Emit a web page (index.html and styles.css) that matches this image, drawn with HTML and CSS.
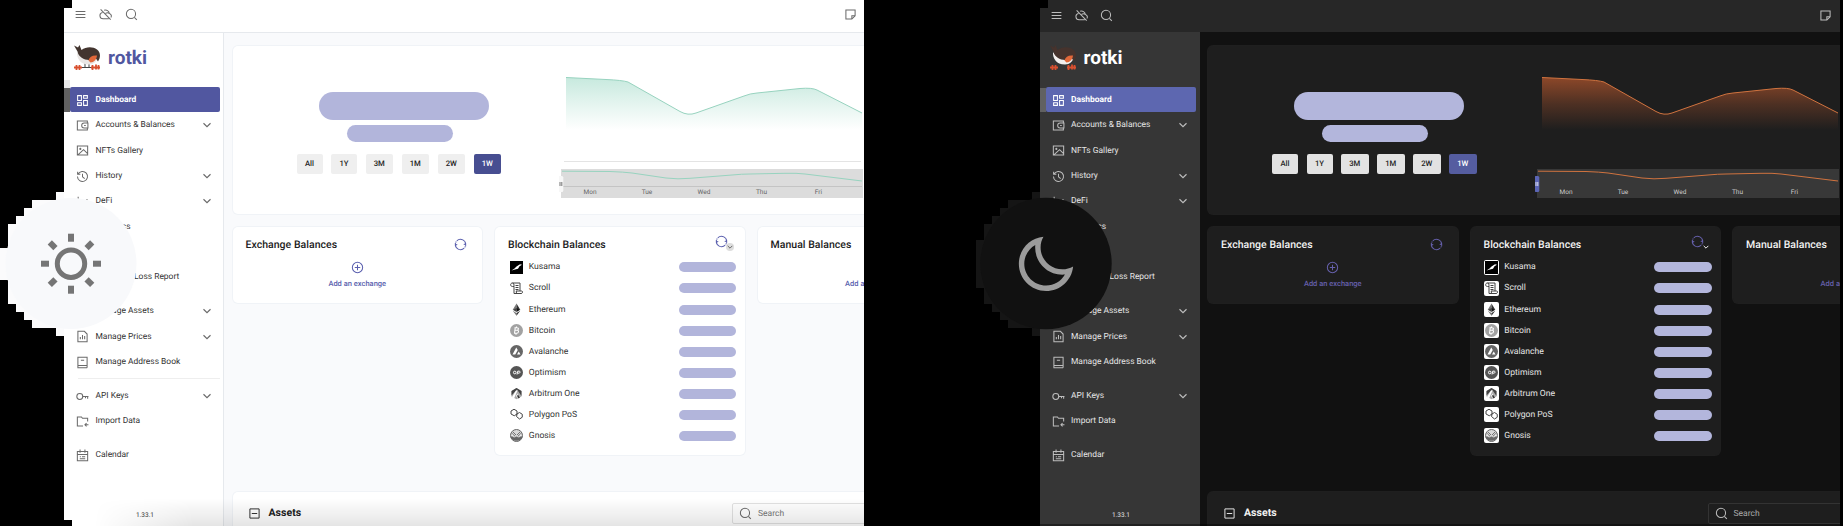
FILE: index.html
```html
<!DOCTYPE html>
<html lang="en">
<head>
<meta charset="utf-8">
<title>rotki</title>
<link rel="stylesheet" href="styles.css">
</head>
<body>
<svg class="sprite" aria-hidden="true">
  <defs>
    <linearGradient id="fade-light" x1="0" y1="0" x2="0" y2="1"><stop offset="0" stop-color="#8fd3bd" stop-opacity=".5"/><stop offset=".5" stop-color="#8fd3bd" stop-opacity=".24"/><stop offset="1" stop-color="#8fd3bd" stop-opacity="0"/></linearGradient>
    <linearGradient id="fade-dark" x1="0" y1="0" x2="0" y2="1"><stop offset="0" stop-color="#a8522c" stop-opacity=".8"/><stop offset=".5" stop-color="#a8522c" stop-opacity=".35"/><stop offset="1" stop-color="#a8522c" stop-opacity="0"/></linearGradient>
  </defs>
  <symbol id="i-menu" viewBox="0 0 24 24"><path d="M3 6.500h18M3 12h18M3 17.500h18"/></symbol>
  <symbol id="i-cloud" viewBox="0 0 24 24"><path d="M3 2.500l18.500 19M6.500 8.500A5.800 5.800 0 0 0 7.500 20h10.500M9.500 4.200A7 7 0 0 1 19 10a5 5 0 0 1 3 7.500M12 10a6 6 0 0 1 7 0"/></symbol>
  <symbol id="i-search" viewBox="0 0 24 24"><circle cx="11" cy="11" r="8.500"/><path d="M17.300 17.300l4.500 4.500"/></symbol>
  <symbol id="i-note" viewBox="0 0 24 24"><path d="M3.500 3.500h17v11l-6 6h-11zM20.500 14.500h-6v6"/></symbol>
  <symbol id="i-dashboard" viewBox="0 0 24 24"><path d="M3 3h7v9H3zM3 16h7v5H3zM14 12h7v9h-7zM14 3h7v5h-7z"/></symbol>
  <symbol id="i-wallet" viewBox="0 0 24 24"><path d="M21 7V3.500H2.500v17H21V17M22 7.500h-7a4.500 4.500 0 0 0 0 9h7zM15 12h3"/></symbol>
  <symbol id="i-image" viewBox="0 0 24 24"><path d="M2.500 3.500h19v17h-19zM3.500 20l10.500-9.500 7 7"/><circle cx="8" cy="9" r="1"/></symbol>
  <symbol id="i-history" viewBox="0 0 24 24"><path d="M3 3v5h5M3.800 7.500A9.300 9.300 0 1 1 2.700 12M12 7v5.500l4 3.500"/></symbol>
  <symbol id="i-line" viewBox="0 0 24 24"><path d="M4 3v17h17M7 14l4-4 4 4 6-6"/></symbol>
  <symbol id="i-file" viewBox="0 0 24 24"><path d="M3.500 2.500h12l5 5v14h-17zM8 17v-4M12 17V9M16 17v-6"/></symbol>
  <symbol id="i-book" viewBox="0 0 24 24"><path d="M20.500 17V2.500h-17v19h17M4 17.500h16.500v4M9 8h6"/></symbol>
  <symbol id="i-key" viewBox="0 0 24 24"><circle cx="7" cy="12" r="5.500"/><path d="M12 12h11M21.500 12v4M17.500 12v3"/></symbol>
  <symbol id="i-folder" viewBox="0 0 24 24"><path d="M21.500 12V6H12l-2-2.500H2.500v17H13M23 18h-6M19.500 15l-3 3 3 3"/></symbol>
  <symbol id="i-calendar" viewBox="0 0 24 24"><path d="M2.500 4.500h19v17h-19zM3 10h18M7.500 1v6M16.500 1v6M7 14.500h2M11 14.500h6M7 18h10"/></symbol>
  <symbol id="i-down" viewBox="0 0 24 24"><path d="M5 8.500l7 7 7-7"/></symbol>
  <symbol id="i-refresh" viewBox="0 0 24 24"><path d="M5.200 5.200A9.500 9.500 0 0 1 21.300 13.500M18.800 18.800A9.500 9.500 0 0 1 2.700 10.500M21.500 15v-4l-3.500.8M2.500 9v4l3.500-.8M3.200 8.500A9.500 9.500 0 0 1 4.200 6.500M20.800 15.500a9.500 9.500 0 0 1-1 2"/></symbol>
  <symbol id="i-plus" viewBox="0 0 24 24"><circle cx="12" cy="12" r="9.500"/><path d="M12 7v10M7 12h10"/></symbol>
  <symbol id="i-minus" viewBox="0 0 24 24"><path d="M3.500 3.500h17v17h-17zM7 12h10"/></symbol>

  <symbol id="c-kusama" viewBox="0 0 26 26"><rect width="26" height="26" fill="#000"/><path d="M3 19l6-4 4-4 7-4.500 4 1-5 3-3 5-6 1.500z" fill="#fff"/></symbol>
  <symbol id="c-scroll" viewBox="0 0 26 26"><path d="M5 9C0 9 0 2 5 2h15v16M5 2c3 0 3 3 3 7v14h14c4 0 4-5 1-5H12c3 3 0 5-2 5M11 7h6M11 11h6M11 15h6M5 9h3" fill="none" stroke="#444" stroke-width="2"/></symbol>
  <symbol id="c-ethereum" viewBox="0 0 26 26"><path d="M13 1v12L5.500 13.500z" fill="#777"/><path d="M13 1v12l7.500.5z" fill="#333"/><path d="M5.500 13.500L13 10.500v7.500z" fill="#444"/><path d="M20.500 13.500L13 10.500v7.500z" fill="#111"/><path d="M5.500 15.500L13 20v5.500z" fill="#777"/><path d="M20.500 15.500L13 20v5.500z" fill="#333"/></symbol>
  <symbol id="c-bitcoin" viewBox="0 0 26 26"><circle cx="13" cy="13" r="13" fill="#a2a2a2"/><path d="M10.500 7l-1.500 12M9 7.500h5c4 0 3.500 5 0 5h-4M10 12.500h4.500c4 0 3 6-1 6H8M13 5v2M12 19v2.500" fill="none" stroke="#fff" stroke-width="2.200"/></symbol>
  <symbol id="c-avalanche" viewBox="0 0 26 26"><circle cx="13" cy="13" r="13" fill="#666"/><path d="M12.500 5l3 5-5 9H5zM17.500 13l3.500 6h-7z" fill="#fff"/></symbol>
  <symbol id="c-optimism" viewBox="0 0 26 26"><circle cx="13" cy="13" r="13" fill="#555"/><ellipse cx="9.500" cy="13" rx="2.600" ry="2.700" fill="none" stroke="#fff" stroke-width="2"/><path d="M14 17l1.500-6.700h3c2.500 0 2 4-.5 4h-2.500" fill="none" stroke="#fff" stroke-width="2"/></symbol>
  <symbol id="c-arbitrum" viewBox="0 0 26 26"><path d="M3 19V8l10-6 10 6v11l-10 5.500z" fill="#aaa"/><path d="M3 17V8l10-6 10 6v10l-9-13z" fill="#444"/><path d="M4 20l8-13h3L8 23zM12 18l3-5 5 8-3 2z" fill="#fff"/><path d="M14 18l2-3 4 6-3 2z" fill="#333"/></symbol>
  <symbol id="c-polygon" viewBox="0 0 26 26"><path d="M14 12l-5.500 3.500-6.500-3.500V6l6-3.500L14 6v7l-1 4 6 5 5.500-3.500v-6L19 9l-6 3.500" fill="none" stroke="#444" stroke-width="2"/></symbol>
  <symbol id="c-gnosis" viewBox="0 0 26 26"><circle cx="13" cy="13" r="12" fill="#d8d8d8" stroke="#666" stroke-width="2"/><path d="M1 15h24a12.500 12 0 0 1-24 0z" fill="#666"/><path d="M3 8l10 9L23 8M6 6l7 7 7-7" fill="none" stroke="#666" stroke-width="1.800"/><path d="M5 11c0 6 6 6 8 2 2 4 8 4 8-2" fill="none" stroke="#fff" stroke-width="1.500"/></symbol>
</svg>

<div class="stage" id="stage"></div>

<template id="app">
  <div class="window">
    <div class="shell">
      <header class="topbar">
        <svg class="ico"><use href="#i-menu"/></svg>
        <svg class="ico"><use href="#i-cloud"/></svg>
        <svg class="ico"><use href="#i-search"/></svg>
        <svg class="ico note"><use href="#i-note"/></svg>
      </header>
      <div class="body">
        <nav class="sidebar">
          <div class="brand">
            <svg class="bird" viewBox="0 0 26 25">
              <path class="leg" d="M11 18v4.500M15 18v4.500M8 22.500h10" fill="none" stroke-width="1"/>
              <path d="M3 7c-.5 6 3 12.500 12 12.500 5 0 7.500-3 8.500-6.500l-6-1-3 2C9 14 6 11 3 7z" class="belly"/>
              <path d="M0 .5l4 2L5.500 0l2 5C12 1.500 19 1.500 23 4.500c3 2.500 3.500 5.500 2.500 9l-1.500 3-3-4.500-6 3C10 15 4.500 12 3.500 6.500z" class="wing"/>
              <path d="M14.500 15.500c1-4 4-5.500 8.500-5-.5 4-3 7-6.500 7z" fill="#e2683a"/>
              <path d="M2.500 20v5M5.500 20v5M18.500 20v5M22 19.500v5M24.500 20v4.500M0 22.500h8M17 22.500h9" fill="none" stroke="#d9502f" stroke-width="1.800"/>
            </svg>
            <span class="name">rotki</span>
          </div>
          <div class="menu"></div>
          <div class="version">1.33.1</div>
        </nav>
        <main class="main">
          <section class="card overview">
            <div class="summary">
              <div class="mask big"></div>
              <div class="mask mid"></div>
              <div class="ranges"><span>All</span><span>1Y</span><span>3M</span><span>1M</span><span>2W</span><span class="on">1W</span></div>
            </div>
            <svg class="chart" viewBox="559 46 305 168">
              <path class="area" d="M566 77.500L606 79.500Q622 80.200 628 82L680 111.500Q688 116 696 113L744 96Q750 93.500 757 93L800 88.500Q812 87.500 817 90L862 113V130H566z"/>
              <path class="stroke" d="M566 77.500L606 79.500Q622 80.200 628 82L680 111.500Q688 116 696 113L744 96Q750 93.500 757 93L800 88.500Q812 87.500 817 90L862 113"/>
              <path class="axis" d="M564 161.500H861"/>
              <rect class="brush" x="561" y="169" width="302" height="29"/>
              <path class="rule" d="M561 186.500H862"/>
              <path class="stroke" d="M562 171.200L610 171.500Q624 172 632 173L666 178Q678 179.500 690 178.300L732 175Q742 174 750 174L785 173.300Q797 173 805 174L862 181"/>
              <rect class="handle" x="558.300" y="176" width="5" height="16" rx="1.500"/>
              <path class="grip" d="M560 182v4M561.800 182v4"/>
              <g class="days"><text x="590" y="193.800">Mon</text><text x="647" y="193.800">Tue</text><text x="704" y="193.800">Wed</text><text x="761.500" y="193.800">Thu</text><text x="818.500" y="193.800">Fri</text></g>
            </svg>
          </section>
          <div class="row">
            <section class="card small">
              <div class="head"><h2>Exchange Balances</h2><svg class="ico act"><use href="#i-refresh"/></svg></div>
              <div class="add"><svg class="ico act"><use href="#i-plus"/></svg><span>Add an exchange</span></div>
            </section>
            <section class="card chains">
              <div class="head"><h2>Blockchain Balances</h2><span class="sync"><svg class="ico act"><use href="#i-refresh"/></svg><svg class="ico more"><use href="#i-down"/></svg></span></div>
              <div class="list"></div>
            </section>
            <section class="card small">
              <div class="head"><h2>Manual Balances</h2></div>
              <div class="add manual"><svg class="ico act"><use href="#i-plus"/></svg><span>Add a manual balance</span></div>
            </section>
          </div>
          <section class="card assets">
            <svg class="ico"><use href="#i-minus"/></svg><h2>Assets</h2>
            <div class="search"><svg class="ico"><use href="#i-search"/></svg><span>Search</span></div>
          </section>
        </main>
      </div>
    </div>
    <div class="shade"></div>
  </div>
</template>
<script src="app.js"></script>
</body>
</html>
```
FILE: styles.css
```css
* { box-sizing: border-box; }
body { margin: 0; background: #000; font-family: Roboto, "Liberation Sans", sans-serif; text-rendering: geometricPrecision; }
.sprite { position: absolute; width: 0; height: 0; }
.stage { display: flex; gap: 176px; width: 1843px; height: 526px; padding-left: 64px; overflow: hidden; }
.theme { position: relative; width: 800px; height: 526px; flex: none; }

.light {
  --bar: #fff; --side: #fff; --bg: #f9fafc; --card: #fff; --line: #e6e9ed; --edge: #f0f3f7;
  --text: #333; --title: #222; --icon: #6a6a6a; --brand: #5157a0; --active: #5157a0; --accent: #5a5fae;
  --mask: #b2b5db; --btn: #efefef; --on: #474e91; --stroke: #97d3bf; --fill: url(#fade-light);
  --brush: #dcdcdc; --rule: #c4c4c4; --axis: #e4e4e4; --day: #666; --handle: #f7f7f7; --grip: #555;
  --shift: 0px; --wing: #43352f; --belly: #e9e6e4; --leg: #444;
}
.dark {
  --bar: #272727; --side: #363636; --bg: #111; --card: #1e1e1e; --line: #363636; --edge: #1f1f1f;
  --text: #e6e6e6; --title: #f2f2f2; --icon: #bdbdbd; --brand: #fff; --active: #5d67b0; --accent: #6660ac;
  --mask: #b3b6dc; --btn: #e2e2e2; --on: #555da0; --stroke: #d0733f; --fill: url(#fade-dark);
  --brush: #383838; --rule: #383838; --axis: #1e1e1e; --day: #ccc; --handle: #5b65b5; --grip: #fff;
  --shift: -0.500px; --wing: #46332d; --belly: #f2efed; --leg: #363636;
}

.window { position: relative; width: 800px; height: 526px; overflow: hidden; background: var(--side);
  clip-path: polygon(8px 0, 100% 0, 100% 100%, 0 100%, 0 8px, 8px 8px); }
.light .window { clip-path: polygon(8px 0, 100% 0, 100% 100%, 8px 100%, 8px 520px, 0 520px, 0 8px, 8px 8px); }
.shell { width: 801px; margin-left: var(--shift); }
.ico { flex: none; width: 13px; height: 13px; fill: none; stroke: var(--icon); stroke-width: 1.900; }

.topbar { display: flex; align-items: center; gap: 12.300px; height: 33px; padding: 0 8.500px 3px 10.200px; background: var(--bar); border-bottom: 1px solid var(--line); }
.dark .topbar { border-bottom: 0; height: 32px; padding-bottom: 2px; }
.dark .body { padding-top: 1px; background: linear-gradient(90deg, #363636 160.500px, #111 160.500px); }
.topbar .note { margin-left: auto; }

.body { display: flex; height: 493px; }
.dark .body { height: 494px; }
.sidebar { display: flex; flex-direction: column; width: 160px; flex: none; border-right: 1px solid var(--line); background: var(--side); }
.dark .sidebar { border: 0; }
.brand { display: flex; align-items: center; gap: 8px; height: 54px; padding: 0 0 5px 10px; }
.bird { width: 26px; height: 25px; }
.wing { fill: var(--wing); } .belly { fill: var(--belly); } .leg { stroke: var(--leg); }
.name { color: var(--brand); font-size: 19px; font-weight: 700; line-height: 24px; }
.menu { padding-left: 6px; }
.item { display: flex; align-items: center; gap: 6.500px; width: 150px; height: 25.330px; padding: .8px 7px 0 6px; color: var(--text); font-size: 8.450px; }
.item .label { flex: 1; white-space: nowrap; }
.item .chev { width: 12px; height: 12px; stroke-width: 2.300; }
.item.active { background: var(--active); color: #fff; font-weight: 700; border-radius: 2px; }
.item.active .ico { stroke: #fff; }
.gap { height: 8.700px; }
.rule-line { display: flex; align-items: center; padding-left: 8px; width: 150px; }
.light .rule-line::before { content: ""; flex: 1; height: 1px; background: #eee; }
.version { margin-top: auto; padding: 0 0 6px 3px; text-align: center; font-size: 6.500px; line-height: 10px; color: var(--text); }

.main { flex: 1; min-width: 0; padding: 13px 0 0 8.500px; overflow: hidden; background: var(--bg); }
.dark .main { background: none; }
.card { background: var(--card); border-radius: 5px; box-shadow: 0 0 0 1px var(--edge); }
.overview { display: flex; width: 660px; height: 168px; }
.summary { display: flex; flex-direction: column; align-items: center; width: 326.500px; padding: 45.500px 0 0 17px; flex: none; }
.mask { background: var(--mask); flex: none; }
.big { width: 170px; height: 28.500px; border-radius: 14px; }
.dark .big, .dark .mid { position: relative; left: -.5px; }
.mid { width: 106px; height: 17px; margin: 5.300px 8px 0 0; border-radius: 8.500px; }
.ranges { display: flex; gap: 8.500px; margin: 12.200px 11px 0 0; }
.ranges span { width: 26px; height: 19.500px; border-radius: 2px; background: var(--btn); color: #222; text-align: center; font-size: 7.700px; line-height: 19.500px; font-weight: 500; }
.ranges span:nth-child(n+3) { width: 27.500px; }
.ranges .on { background: var(--on); color: #fff; }
.chart { width: 305px; height: 168px; flex: none; }
.area { fill: var(--fill); }
.stroke { fill: none; stroke: var(--stroke); stroke-width: 1; }
.axis { stroke: var(--axis); } .rule { stroke: var(--rule); } .brush { fill: var(--brush); }
.handle { fill: var(--handle); } .grip { stroke: var(--grip); stroke-width: .8; }
.days { fill: var(--day); font-size: 6.500px; text-anchor: middle; }

.row { display: flex; align-items: flex-start; gap: 13px; width: 800px; margin-top: 13px; }
.small { width: 249.500px; height: 76px; }
.chains { width: 249.500px; height: 228px; }
.head { display: flex; align-items: center; justify-content: space-between; height: 34px; padding: 0 15px 0 13px; }
.card h2 { margin: 0; color: var(--title); font-size: 10.500px; font-weight: 500; letter-spacing: .03px; white-space: nowrap; }
.ico.act { stroke: var(--accent); }
.add { display: flex; flex-direction: column; align-items: center; gap: 4px; color: var(--accent); font-size: 7.500px; line-height: 12px; font-weight: 500; }
.sync { display: flex; margin-right: -4.500px; margin-top: -3px; }
.more { width: 8px; height: 8px; margin: 8px 0 0 -2px; border-radius: 4px; stroke-width: 3; }
.light .more { background: #ddd; }
.dark .more { stroke: #eee; }
.list { padding: 0 8.500px 0 13.600px; margin-top: -4.200px; }
.chain { display: flex; align-items: center; height: 21.080px; color: var(--text); font-size: 8.600px; }
.coin { display: flex; width: 15px; height: 15px; padding: 1px; margin-right: 5.200px; border-radius: 2px; }
.dark .coin { background: #fff; }
.coin svg { width: 13px; height: 13px; }
.chain .mask { width: 57.500px; height: 10px; margin-left: auto; border-radius: 5px; }

.assets { display: flex; align-items: flex-start; width: 700px; height: 60px; margin-top: 37px; padding: 11px 0 0 15px; }
.assets > .ico { flex: none; margin-top: 3.500px; stroke: var(--title); stroke-width: 1.700; }
.assets h2 { flex: none; width: 470.500px; margin: 1.500px 0 0 8px; font-size: 10.500px; line-height: 16px; font-weight: 700; }
.search { display: flex; align-items: center; gap: 6px; width: 200px; height: 21px; margin-left: -7px; padding-left: 6px; border: 1px solid #e2e2e2; border-radius: 2px; color: #777; font-size: 8.500px; }
.dark .search { border-color: #333; color: #aaa; }
.shade { position: absolute; left: 0; right: 0; bottom: 0; height: 28px; }
.light .shade { background: linear-gradient(transparent, rgba(0,0,0,.1)); mask-image: linear-gradient(90deg, transparent 30px, #000 130px); }
.dark .shade { height: 2px; background: rgba(0,0,0,.4); }

.tab { position: absolute; left: 0; top: 88px; width: 6px; height: 24px; background: #616161; }
.light .tab { box-shadow: 0 -8px 0 #e9e9e9; }

.blob { position: absolute; left: -64px; top: 192px; width: 140px; height: 144px; }
.blob .halo { fill: #fbfbfc; } .blob .disc { fill: #f8f9fb; } .blob .glyph { stroke: #757575; fill: none; }
.dark .blob .halo { fill: #151515; } .dark .blob .disc { fill: #111; } .dark .blob .glyph { fill: #9b9b9b; stroke: none; }
```
FILE: app.js
```js
const menu = [
  ['dashboard', 'Dashboard', 'active'],
  ['wallet', 'Accounts & Balances', 'more'],
  ['image', 'NFTs Gallery'],
  ['history', 'History', 'more'],
  ['line', 'DeFi', 'more'],
  ['line', 'Statistics'],
  ['line', 'Staking'],
  ['file', 'Profit and Loss Report'],
  null,
  ['file', 'Manage Assets', 'more'],
  ['file', 'Manage Prices', 'more'],
  ['book', 'Manage Address Book'],
  null,
  ['key', 'API Keys', 'more'],
  ['folder', 'Import Data'],
  null,
  ['calendar', 'Calendar']
];
const chains = ['Kusama', 'Scroll', 'Ethereum', 'Bitcoin', 'Avalanche', 'Optimism', 'Arbitrum One', 'Polygon PoS', 'Gnosis'];

const sun = '<g class="glyph"><circle cx="71" cy="71.700" r="13.700" stroke-width="5"/>' +
  [0, 45, 90, 135, 180, 225, 270, 315].map(a =>
    `<path d="M71 49.700v-8" stroke-width="6" transform="rotate(${a} 71 71.700)"/>`).join('') + '</g>';
const moon = '<path class="glyph" transform="translate(37.400 39.200) scale(2.720)" fill-rule="evenodd" d="M10 6C10 10.418 13.582 14 18 14C19.439 14 20.789 13.620 21.955 12.956C21.474 18.030 17.200 22 12 22C6.477 22 2 17.523 2 12C2 6.800 5.970 2.526 11.044 2.045C10.380 3.212 10 4.561 10 6ZM4 12C4 16.418 7.582 20 12 20C14.965 20 17.576 18.379 18.957 15.955C18.641 15.985 18.321 16 18 16C12.477 16 8 11.523 8 6C8 5.679 8.015 5.359 8.045 5.043C5.621 6.424 4 9.035 4 12Z"/>';

const halo = {
  light: 'M64 0H56V8H32V16H24V24H16V32H8V56H0V88H8V112H16V120H24V128H32V136H56V144H64z',
  dark: 'M64 0H56V8H32V16H24V24H16V32H8V48H0V96H8V112H16V120H24V128H32V136H56V144H64z'
};
const blobs = {
  light: `<path class="halo" d="${halo.light}"/><circle class="disc" cx="71" cy="71.500" r="65.500"/>${sun}`,
  dark: `<path class="halo" d="${halo.dark}"/><circle class="disc" cx="70" cy="71.500" r="65.700"/>${moon}`
};

for (const theme of ['light', 'dark']) {
  const root = document.createElement('div');
  root.className = `theme ${theme}`;
  root.append(document.getElementById('app').content.cloneNode(true));
  root.querySelector('.menu').innerHTML = menu.map((m, i) => m
    ? `<div class="item ${m[2] === 'active' ? 'active' : ''}"><svg class="ico"><use href="#i-${m[0]}"/></svg><span class="label">${m[1].replace('&', '&amp;')}</span>${m[2] === 'more' ? '<svg class="ico chev"><use href="#i-down"/></svg>' : ''}</div>`
    : `<div class="gap ${i === 12 ? 'rule-line' : ''}"></div>`).join('');
  root.querySelector('.list').innerHTML = chains.map(c =>
    `<div class="chain"><span class="coin"><svg><use href="#c-${c.split(' ')[0].toLowerCase()}"/></svg></span><span>${c}</span><span class="mask"></span></div>`).join('');
  root.insertAdjacentHTML('beforeend', `<div class="tab"></div><svg class="blob">${blobs[theme]}</svg>`);
  document.getElementById('stage').append(root);
}
```
